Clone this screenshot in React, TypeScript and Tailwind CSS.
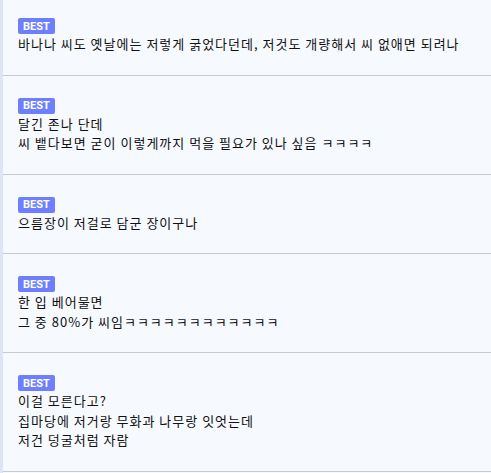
const comments = [
  { id: 1, lines: ["바나나 씨도 옛날에는 저렇게 굵었다던데, 저것도 개량해서 씨 없애면 되려나"] },
  { id: 2, lines: ["달긴 존나 단데", "씨 뱉다보면 굳이 이렇게까지 먹을 필요가 있나 싶음 ㅋㅋㅋㅋ"] },
  { id: 3, lines: ["으름장이 저걸로 담군 장이구나"] },
  { id: 4, lines: ["한 입 베어물면", "그 중 80%가 씨임ㅋㅋㅋㅋㅋㅋㅋㅋㅋㅋㅋㅋ"] },
  { id: 5, lines: ["이걸 모른다고?", "집마당에 저거랑 무화과 나무랑 잇엇는데", "저건 덩굴처럼 자람"] },
]

export default function App() {
  return (
    <div className="min-h-[473px] w-[491px] bg-[#f6f9fe] border-l-[3px] border-[#dfe5f6] font-['Noto_Sans_CJK_KR','Noto_Sans',sans-serif]">
      {comments.map((c, i) => (
        <div
          key={c.id}
          className={`${i === 0 ? "pt-[18px]" : "pt-[22px]"} pb-[21px] pl-[15px] border-b border-[#c7c9cd] flex flex-col items-start`}
        >
          <span className="flex h-[16px] items-center rounded-[2px] bg-[#6e7ffd] px-[5px] font-['Roboto',sans-serif] text-[11px] font-bold leading-none text-white">
            BEST
          </span>
          <div className="text-[13px] leading-[19.5px] tracking-[1px] text-[#111]">
            {c.lines.map((l, j) => (
              <p key={j}>{l}</p>
            ))}
          </div>
        </div>
      ))}
    </div>
  )
}
